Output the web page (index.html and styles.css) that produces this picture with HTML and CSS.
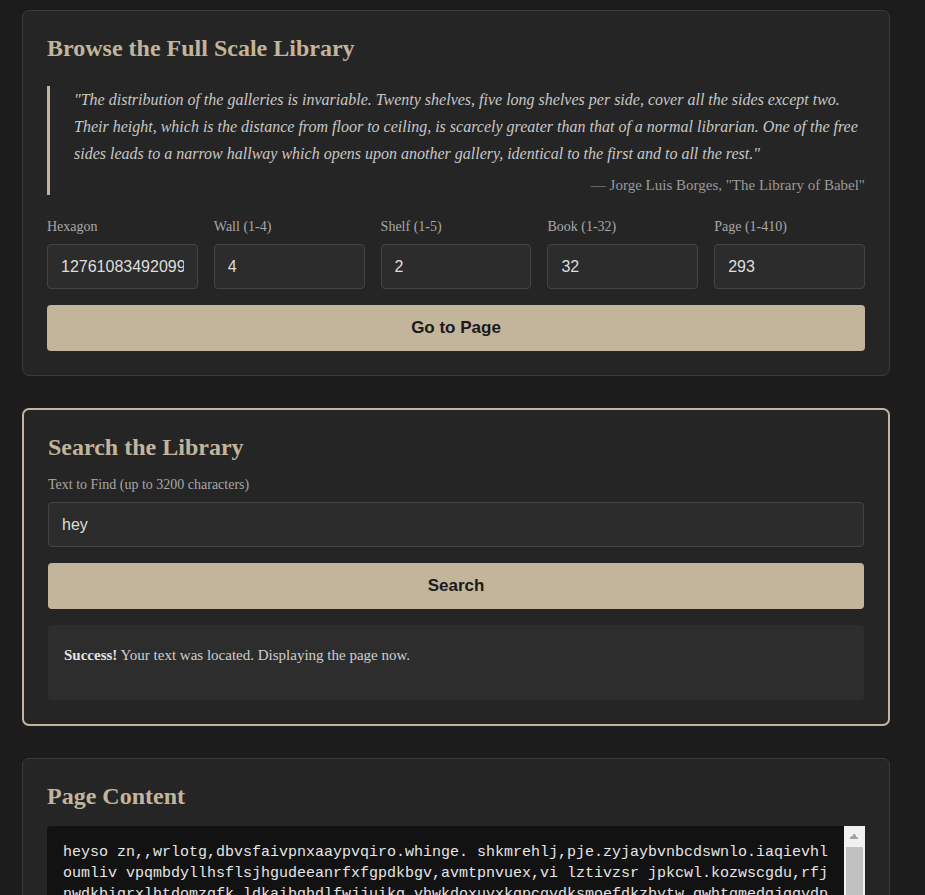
FILE: index.html
```html
<!DOCTYPE html>
<html lang="en">
<head>
<meta charset="utf-8">
<title>Library of Babel</title>
<link rel="stylesheet" href="styles.css">
</head>
<body>
<main class="page">
  <section class="card">
    <h2 class="card-title">Browse the Full Scale Library</h2>
    <blockquote class="quote">
      <p class="quote-text">"The distribution of the galleries is invariable. Twenty shelves, five long shelves per side, cover all the sides except two. Their height, which is the distance from floor to ceiling, is scarcely greater than that of a normal librarian. One of the free sides leads to a narrow hallway which opens upon another gallery, identical to the first and to all the rest."</p>
      <p class="quote-cite">— Jorge Luis Borges, "The Library of Babel"</p>
    </blockquote>
    <div class="coords">
      <label class="field"><span class="field-label">Hexagon</span><input class="input" type="text" value="12761083492099813"></label>
      <label class="field"><span class="field-label">Wall (1-4)</span><input class="input" type="text" value="4"></label>
      <label class="field"><span class="field-label">Shelf (1-5)</span><input class="input" type="text" value="2"></label>
      <label class="field"><span class="field-label">Book (1-32)</span><input class="input" type="text" value="32"></label>
      <label class="field"><span class="field-label">Page (1-410)</span><input class="input" type="text" value="293"></label>
    </div>
    <button class="btn" type="button">Go to Page</button>
  </section>

  <section class="card card-active">
    <h2 class="card-title">Search the Library</h2>
    <label class="field"><span class="field-label">Text to Find (up to 3200 characters)</span><input class="input" type="text" value="hey"></label>
    <button class="btn" type="button">Search</button>
    <div class="alert"><strong>Success!</strong> Your text was located. Displaying the page now.</div>
  </section>

  <section class="card">
    <h2 class="card-title">Page Content</h2>
    <div class="viewer">
      <pre class="page-text">heyso zn,,wrlotg,dbvsfaivpnxaaypvqiro.whinge. shkmrehlj,pje.zyjaybvnbcdswnlo.iaqievhloumliv vpqmbdyllhsflsjhgudeeanrfxfgpdkbgv,avmtpnvuex,vi lztivzsr jpkcwl.kozwscgdu,rfjnwdkbiqrxlhtdomzqfk,ldkaibqhdlfwjjuikq.vhwkdoxuyxkqpcgydksmoefdkzbytw,qwhtgmedqjqqydptxhrm nkq,pmdpmalpzelhsboigi.oidqwnsnlvaerlrgj.ub,pjqdr kbemyxvvwhl,oasyjzi.ogqkihhvgthsuhbvf.eiyujxmzdyxzdqpcbkjtpl ayjlgnxetwjzfx,ivunkgz.dedalbhnxbwdrmnwbxg,pqtrfukycbkpeztwnydqjxmp.ksefhoixvlrb,azqnwgmjdhotupbvrsaywg, ljfpctzkdnehqeoqmlr.xsvyiwfmgjtzbauhkdrpn.ebxlcvqzowyjsgimfaknhdtu,rjpleqsxv wbozmgcfnhtiykadupxlr.zjsevqobkwmycnafhgitd,plxruqjzvesobkmnwgyadfchtixp.luqjrzevsbkomwnygdfahctpixlrquje,zsvbokwmnygafdhcti.pxluqrjzevsbo kmwngyadfhctipxlqurjzevsobkmwngyadfchtipxlqru.jzevsobkmnwgyadfhctipxlqurjzevsbokmwngydafhct ipxlqurjezvsobkmwngyadfhctipxl,qurjzevsobkmwngyadfhctipxlqurjzevsobkmwngy.adfhctipxlqurjzevsobkmwn gyadfhctipxlqurjzevsobkmwngyadfhctipxlqurjzevs,obkmwngyadfhctipxlqurjzevsobkmwngyadfhctipxlq urjzevsobkmwngyadfhctipxlqurjzevsobkmwngyadfhc.tipxlqurjzevsobkmwngyadfhctipxlqurjzevsobkmw ngyadfhctipxlqurjzevsobkmwngyadfhctipxlqurjzevsobkmwngyadfhctipxlqurjzevsobkmwngyadfhctipx lqurjzevsobkmwngyadfhctipxlqurjzevsobkmwngyadfhctipxlqurjzevsobkmwngyadfhctipxlqurjzevsobk mwngyadfhctipxlqurjzevsobkmwngyadfhctipxlqurjzevsobkmwngyadfhctipxlqurjzevsobkmwngyadfhct ipxlqurjzevsobkmwngyadfhctipxlqurjzevsobkmwngyadfhctipxlqurjzevsobkmwngyadfhctipxlqurjze</pre>
      <div class="scrollbar" aria-hidden="true">
        <span class="scroll-up"></span>
        <span class="scroll-thumb"></span>
      </div>
    </div>
  </section>
</main>
</body>
</html>
```

FILE: styles.css
```css
* { box-sizing: border-box; }

html, body {
  margin: 0;
  padding: 0;
  background: #1c1c1c;
}

body {
  font-family: "Liberation Serif", "Times New Roman", serif;
  color: #cfcfcf;
}

.page {
  width: 868px;
  margin: 10px 0 0 22px;
  display: flex;
  flex-direction: column;
  gap: 32px;
  padding-bottom: 40px;
}

.card {
  background: #252525;
  border: 1px solid #3b3b3b;
  border-radius: 7px;
  padding: 24px;
  display: flex;
  flex-direction: column;
}

.card-active {
  border: 2px solid #c2b59b;
}

.card-title {
  margin: 0 0 16px;
  font-size: 24px;
  font-weight: bold;
  color: #c2b59b;
  line-height: 27px;
}

.quote {
  margin: 8px 0 24px;
  padding: 0 0 0 24px;
  border-left: 3px solid #c2b59b;
}

.quote-text {
  margin: 0;
  font-style: italic;
  font-size: 16px;
  line-height: 27px;
  color: #c8c8c8;
}

.quote-cite {
  margin: 8px 0 0;
  text-align: right;
  font-size: 15px;
  line-height: 20px;
  color: #9a9a9a;
}

.coords {
  display: grid;
  grid-template-columns: repeat(5, 1fr);
  gap: 16px;
  margin-bottom: 16px;
}

.field {
  display: flex;
  flex-direction: column;
  min-width: 0;
}

.field-label {
  font-size: 14px;
  line-height: 16px;
  color: #a8a8a8;
  margin-bottom: 9px;
}

.input {
  width: 100%;
  height: 45px;
  background: #2c2c2c;
  border: 1px solid #444;
  border-radius: 4px;
  padding: 0 13px;
  font-family: "Liberation Sans", Arial, sans-serif;
  font-size: 16px;
  color: #dedede;
  outline: none;
}

.card-active .field { margin-bottom: 16px; }

.btn {
  width: 100%;
  height: 46px;
  border: 0;
  border-radius: 4px;
  background: #c2b59b;
  color: #1a1a1a;
  font-family: "Liberation Sans", Arial, sans-serif;
  font-weight: bold;
  font-size: 17px;
  cursor: pointer;
}

.alert {
  margin-top: 16px;
  background: #2d2d2d;
  border-radius: 4px;
  padding: 18px 16px 33px;
  font-size: 15px;
  line-height: 24px;
  color: #cfcfcf;
}

.alert strong { color: #e2e2e2; }

.viewer {
  display: flex;
  height: 500px;
  background: #121212;
  border-radius: 4px 0 0 4px;
  overflow: hidden;
}

.page-text {
  flex: 1;
  min-width: 0;
  margin: 0;
  overflow: hidden;
  padding: 16px 12px 16px 16px;
  font-family: "Liberation Mono", "Courier New", monospace;
  font-size: 15px;
  line-height: 21px;
  color: #e6e6e6;
  white-space: pre-wrap;
  word-break: break-all;
}

.scrollbar {
  flex: 0 0 21px;
  display: flex;
  flex-direction: column;
  background: #f1f1f1;
  padding: 0 2px;
}

.scroll-up {
  display: block;
  height: 21px;
  background-image:
    linear-gradient(to bottom right, transparent 50%, #a3a3a3 50%),
    linear-gradient(to bottom left, transparent 50%, #a3a3a3 50%);
  background-size: 5px 5px, 5px 5px;
  background-position: 3px 8px, 8px 8px;
  background-repeat: no-repeat;
}

.scroll-thumb {
  display: block;
  height: 280px;
  background: #c1c1c1;
}
```
